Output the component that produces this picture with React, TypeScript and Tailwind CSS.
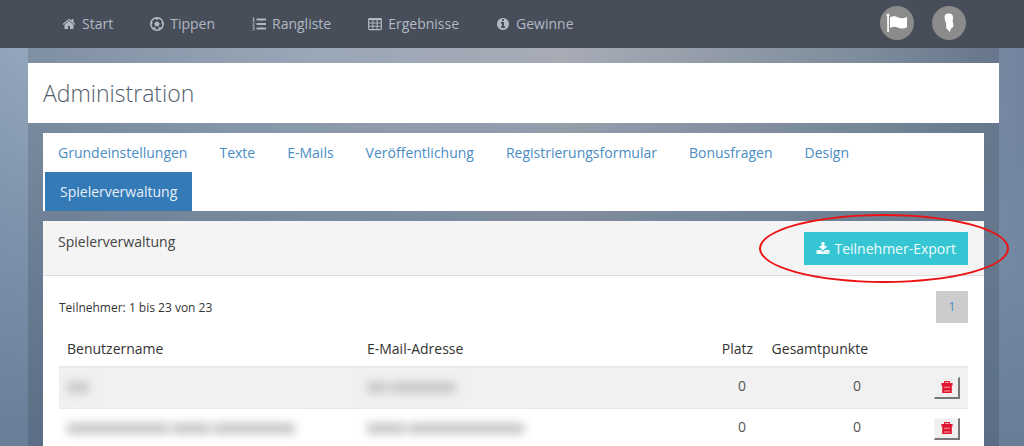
import type { ReactNode } from 'react';

type IconProps = { className?: string };

function HomeIcon({ className }: IconProps) {
  return (
    <svg viewBox="0 0 1792 1792" fill="currentColor" className={className} aria-hidden="true">
      <path d="M1472 992v480q0 26-19 45t-45 19h-384v-384h-256v384h-384q-26 0-45-19t-19-45v-480q0-1 .5-3t.5-3l575-474 575 474q1 2 1 6zm223-69l-62 74q-8 9-21 11h-3q-13 0-21-7l-692-577-692 577q-12 8-24 7-13-2-21-11l-62-74q-8-10-7-23.5t11-21.5l719-599q32-26 76-26t76 26l244 204v-195q0-14 9-23t23-9h192q14 0 23 9t9 23v408l219 182q10 8 11 21.5t-7 23.5z" />
    </svg>
  );
}

function BallIcon({ className }: IconProps) {
  return (
    <svg viewBox="0 0 14 14" className={className} aria-hidden="true">
      <circle cx="7" cy="7" r="6.2" fill="none" stroke="currentColor" strokeWidth="1.4" />
      <g fill="currentColor">
        <path d="M7 4.3l2.7 1.9-1 3.1H5.300l-1-3.100z" />
        <path d="M4.300 1h5.400L7 3.100zM13.200 4l.3 4.600-2.400-2.500zM.8 4l-.3 4.600 2.400-2.500zM12 10.700l-3.800 2.500.6-3.200zM2 10.700l3.800 2.500-.6-3.200z" />
      </g>
    </svg>
  );
}

function RankIcon({ className }: IconProps) {
  return (
    <svg viewBox="0 0 14 14" className={className} aria-hidden="true">
      <path d="M4.5 2.5H14M4.5 7H14M4.5 11.5H14" stroke="currentColor" strokeWidth="1.9" />
      <path d="M.6 1.2l1-.7v3.3M.5 3.9h2.3M.6 5.8c.8-.8 2-.2 1.7.7-.2.6-1.6 1.1-1.7 1.9h2M.6 10.2h1.8l-1 1.2c1.8.2 1.3 2.2-.9 1.7" fill="none" stroke="currentColor" strokeWidth="0.9" />
    </svg>
  );
}

function TableIcon({ className }: IconProps) {
  return (
    <svg viewBox="0 0 14 14" className={className} aria-hidden="true">
      <rect x="0.6" y="1.6" width="12.8" height="11" rx="1" fill="none" stroke="currentColor" strokeWidth="1.1" />
      <path d="M.5 2.300h13" stroke="currentColor" strokeWidth="1.8" />
      <path d="M.5 6h13M.5 9.200h13M4.900 2v11M9.100 2v11" stroke="currentColor" strokeWidth="1" />
    </svg>
  );
}

function InfoIcon({ className }: IconProps) {
  return (
    <svg viewBox="0 0 1792 1792" fill="currentColor" className={className} aria-hidden="true">
      <path d="M1152 1376v-160q0-14-9-23t-23-9h-96v-512q0-14-9-23t-23-9h-320q-14 0-23 9t-9 23v160q0 14 9 23t23 9h96v320h-96q-14 0-23 9t-9 23v160q0 14 9 23t23 9h448q14 0 23-9t9-23zm-128-896v-160q0-14-9-23t-23-9h-192q-14 0-23 9t-9 23v160q0 14 9 23t23 9h192q14 0 23-9t9-23zm640 416q0 209-103 385.5t-279.5 279.5-385.5 103-385.5-103-279.5-279.5-103-385.5 103-385.5 279.5-279.5 385.5-103 385.5 103 279.5 279.5 103 385.5z" />
    </svg>
  );
}

function DownloadIcon({ className }: IconProps) {
  return (
    <svg viewBox="0 0 1792 1792" fill="currentColor" className={className} aria-hidden="true">
      <path d="M1344 1344q0-26-19-45t-45-19-45 19-19 45 19 45 45 19 45-19 19-45zm256 0q0-26-19-45t-45-19-45 19-19 45 19 45 45 19 45-19 19-45zm128-224v320q0 40-28 68t-68 28h-1472q-40 0-68-28t-28-68v-320q0-40 28-68t68-28h465l135 136q58 56 136 56t136-56l136-136h464q40 0 68 28t28 68zm-325-569q17 41-14 70l-448 448q-18 19-45 19t-45-19l-448-448q-31-29-14-70 17-39 59-39h256v-448q0-26 19-45t45-19h256q26 0 45 19t19 45v448h256q42 0 59 39z" />
    </svg>
  );
}

function TrashIcon({ className }: IconProps) {
  return (
    <svg viewBox="0 0 12 12" className={className} aria-hidden="true">
      <path d="M3.7 2.4V.6h4.6v1.8" fill="none" stroke="currentColor" strokeWidth="1.2" />
      <path d="M.4 2h11.2v2.6H.4zM1.2 4.4h9.6V12H1.2z" fill="currentColor" />
      <path d="M3 6.200h6M3 10h6" stroke="#f3d5d8" strokeWidth="0.7" />
    </svg>
  );
}

function FlagIcon({ className }: IconProps) {
  return (
    <svg viewBox="0 0 22 20" fill="currentColor" className={className} aria-hidden="true">
      <circle cx="2" cy="2" r="1.6" />
      <path d="M1.2 2h1.7v17H1.2zM4 4.300c3.500-1.700 5.500-1 8.200.2 3 1.200 5.500.8 8.800-.5v10.300c-3.300 1.600-6 1.500-8.800.4-2.700-1.100-5-1.300-8.200.3z" />
    </svg>
  );
}

function PersonIcon({ className }: IconProps) {
  return (
    <svg viewBox="0 0 12 20" fill="currentColor" className={className} aria-hidden="true">
      <path d="M2.300 1.600C3.300.5 4.600.3 6 .4c2.500 0 4.100 1.400 4.100 3.800 0 1.500-.2 2.700-.6 4 .8 1.500 1.100 3.600.7 5.800l-1.900 1.300-1.500 4-1.800-2.200-1.700-1.800-.2-3.500c.2-1.300.1-1.900-.5-2.900C1.500 6.800 1 3.400 2.300 1.600z" />
    </svg>
  );
}

const navItems: { label: string; icon: ReactNode }[] = [
  { label: 'Start', icon: <HomeIcon className="size-[14px]" /> },
  { label: 'Tippen', icon: <BallIcon className="size-[14px]" /> },
  { label: 'Rangliste', icon: <RankIcon className="size-[14px]" /> },
  { label: 'Ergebnisse', icon: <TableIcon className="size-[14px]" /> },
  { label: 'Gewinne', icon: <InfoIcon className="size-[14px]" /> },
];

const tabs = [
  'Grundeinstellungen',
  'Texte',
  'E-Mails',
  'Veröffentlichung',
  'Registrierungsformular',
  'Bonusfragen',
  'Design',
  'Spielerverwaltung',
];

// Personal data is masked, only the widths of the words are kept
const players = [
  { id: 1, name: [22], email: [20, 66], place: 0, points: 0 },
  { id: 2, name: [102, 38, 82], email: [38, 116], place: 0, points: 0 },
];

function Masked({ words }: { words: number[] }) {
  return (
    <div className="flex gap-[3px] blur-[5px]">
      {words.map((width, i) => (
        <span key={i} className="h-[11px] bg-[#c6c6c6]" style={{ width }} />
      ))}
    </div>
  );
}

function Navbar() {
  return (
    <header className="flex h-12 items-center justify-between bg-[#474d59] pr-[58px] pl-[62px]">
      <nav className="flex items-center gap-[37px]">
        {navItems.map((item) => (
          <a key={item.label} href="#" className="flex items-center gap-[6px] text-[14px] leading-5 text-[#b2b9c4]">
            {item.icon}
            {item.label}
          </a>
        ))}
      </nav>
      <div className="flex gap-[18px] pb-[2px]">
        <button type="button" aria-label="Sprache" className="flex size-[34px] items-center justify-center rounded-full bg-[#8b8b8b] text-white">
          <FlagIcon className="h-5 w-[22px]" />
        </button>
        <button type="button" aria-label="Profil" className="flex size-[34px] items-center justify-center rounded-full bg-[#8b8b8b] text-white">
          <PersonIcon className="h-5 w-3" />
        </button>
      </div>
    </header>
  );
}

function Tabs() {
  return (
    <ul className="mx-[15px] flex flex-wrap bg-white">
      {tabs.map((tab, i) => (
        <li key={tab} className={i > 0 ? 'ml-[2px]' : ''}>
          <a
            href="#"
            className={`block px-[15px] py-[10px] text-[14px] leading-[19px] ${
              tab === 'Spielerverwaltung' ? 'bg-[#337ab7] text-[#e8f0f7]' : 'text-[#4a8cc4]'
            }`}
          >
            {tab}
          </a>
        </li>
      ))}
    </ul>
  );
}

function PlayerTable() {
  return (
    <table className="w-full table-fixed text-[14px] leading-5 text-[#555]">
      <colgroup>
        <col className="w-[33%]" />
        <col />
        <col className="w-[100px]" />
        <col className="w-[115px]" />
        <col className="w-[92px]" />
      </colgroup>
      <thead>
        <tr className="h-[34px] border-b-2 border-[#e7e9ec] text-left text-[#333]">
          <th className="px-2 pb-[2px] font-medium">Benutzername</th>
          <th className="px-2 pb-[2px] font-medium">E-Mail-Adresse</th>
          <th className="px-2 pb-[2px] text-right font-medium">Platz</th>
          <th className="px-2 pb-[2px] text-right font-medium">Gesamtpunkte</th>
          <th aria-label="Aktionen" />
        </tr>
      </thead>
      <tbody>
        {players.map((player) => (
          <tr key={player.id} className="h-[41px] border-b border-[#e7e9ec] odd:bg-[#f1f1f1]">
            <td className="px-2"><Masked words={player.name} /></td>
            <td className="px-2"><Masked words={player.email} /></td>
            <td className="pr-[15px] pb-[3px] text-right">{player.place}</td>
            <td className="pr-[15px] pb-[3px] text-right">{player.points}</td>
            <td className="pr-2">
              <button
                type="button"
                aria-label="Spieler löschen"
                className="ml-auto flex h-[22px] w-[26px] items-center justify-center border-t border-r-2 border-b-2 border-l border-t-[#f6f6f6] border-r-[#777] border-b-[#777] border-l-[#f6f6f6] bg-[#efefef] text-[#e0142f]"
              >
                <TrashIcon className="size-3" />
              </button>
            </td>
          </tr>
        ))}
      </tbody>
    </table>
  );
}

export default function App() {
  return (
    <div className="flex min-h-screen flex-col bg-[linear-gradient(180deg,transparent_12%,rgba(115,137,163,0.8)_60%,#687e98_100%),linear-gradient(90deg,#90a3b9_0%,#b1c0d3_30%,#c1c6d1_55%,#8fa1b2_85%,#72839e_100%)] font-['Open_Sans',sans-serif]">
      <Navbar />

      <main className="mr-[25px] ml-7 flex-grow bg-black/13 pt-[15px]">
        <h1 className="bg-white px-[15px] py-[15px] text-[23px] leading-[30px] font-light text-[#525e6b]">
          Administration
        </h1>

        <div className="mt-[10px]">
          <Tabs />
        </div>

        <section className="mx-[15px] mt-[10px] bg-white">
          <div className="flex items-start justify-between border-b border-[#ddd] bg-[#f4f4f4] px-[15px] pt-[11px] pb-[10px]">
            <h2 className="text-[14px] leading-5 text-[#444]">Spielerverwaltung</h2>
            <div className="relative mr-[1px]">
              <button type="button" className="flex items-center gap-1 bg-[#36c6d3] px-3 py-[6px] text-[14px] leading-[21px] text-[#f0fbfc]">
                <DownloadIcon className="size-[14px]" />
                Teilnehmer-Export
              </button>
              {/* Marker around the export button */}
              <div className="pointer-events-none absolute -top-[18px] -right-[41px] -bottom-[18px] -left-[45px] rounded-[50%] border-2 border-[#ee1111]" />
            </div>
          </div>

          <div className="px-4 pt-[15px]">
            <div className="flex items-center justify-between pb-[10px]">
              <p className="pt-[2px] text-[12px] leading-5 text-[#333]">Teilnehmer: 1 bis 23 von 23</p>
              <a href="#" className="flex size-8 items-center justify-center bg-[#ccc] text-[12px] text-[#4a8cc4]">
                1
              </a>
            </div>
            <PlayerTable />
          </div>
        </section>
      </main>
    </div>
  );
}
